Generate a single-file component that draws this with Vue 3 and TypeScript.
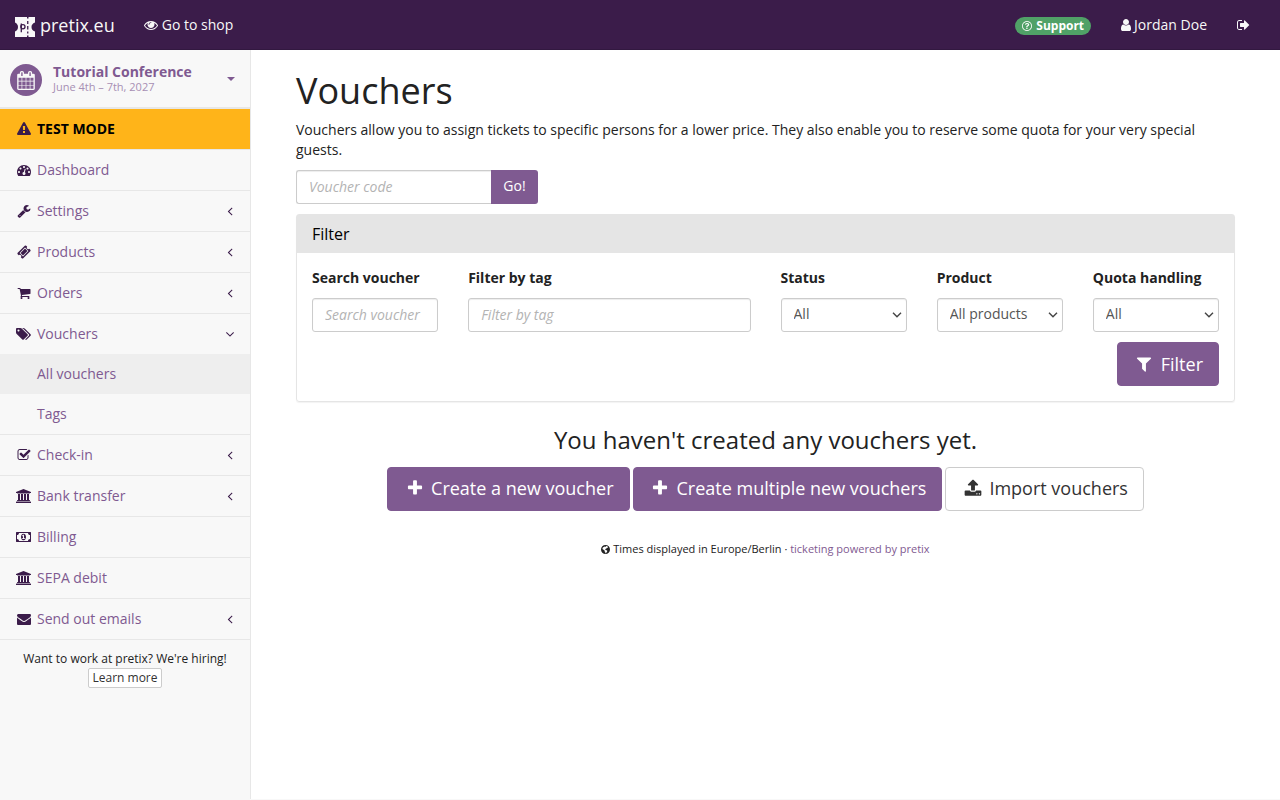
<script setup lang="ts">
import { h, ref } from 'vue'

interface Glyph {
  d: string
  x?: number
  w?: number
}

const glyphs: Record<string, Glyph> = {
  eye: { d: 'M1664 960q-152-236-381-353 61 104 61 225 0 185-131.5 316.5t-316.5 131.5-316.5-131.5-131.5-316.5q0-121 61-225-229 117-381 353 133 205 333.5 326.5t434.5 121.5 434.5-121.5 333.5-326.5zm-720-384q0-20-14-34t-34-14q-125 0-214.5 89.5t-89.5 214.5q0 20 14 34t34 14 34-14 14-34q0-86 61-147t147-61q20 0 34-14t14-34zm848 384q0 34-20 69-140 230-376.5 368.5t-499.5 138.5-499.5-139-376.5-368q-20-35-20-69t20-69q140-229 376.5-368t499.5-139 499.5 139 376.5 368q20 35 20 69z' },
  user: { x: 256, w: 1280, d: 'M1536 1399q0 109-62.5 187t-150.5 78h-854q-88 0-150.5-78t-62.5-187q0-85 8.5-160.5t31.5-152 58.5-131 94-89 134.5-34.5q131 128 313 128t313-128q76 0 134.5 34.5t94 89 58.5 131 31.5 152 8.5 160.5zm-256-887q0 159-112.5 271.5t-271.5 112.5-271.5-112.5-112.5-271.5 112.5-271.5 271.5-112.5 271.5 112.5 112.5 271.5z' },
  signOut: { x: 64, w: 1664, d: 'M704 1440q0 4 1 20t.5 26.5-3 23.5-10 19.5-20.5 6.5h-320q-119 0-203.5-84.5t-84.5-203.5v-704q0-119 84.5-203.5t203.5-84.5h320q13 0 22.5 9.5t9.5 22.5q0 4 1 20t.5 26.5-3 23.5-10 19.5-20.5 6.5h-320q-66 0-113 47t-47 113v704q0 66 47 113t113 47h312l11.5 1 11.5 3 8 5.5 7 9 2 13.5zm928-544q0 26-19 45l-544 544q-19 19-45 19t-45-19-19-45v-288h-448q-26 0-45-19t-19-45v-384q0-26 19-45t45-19h448v-288q0-26 19-45t45-19 45 19l544 544q19 19 19 45z' },
  question: { x: 128, w: 1536, d: 'M976 1192v128q0 14-9 23t-23 9h-128q-14 0-23-9t-9-23v-128q0-14 9-23t23-9h128q14 0 23 9t9 23zm240-484q0 50-15 90t-45.5 69-52 44-59.5 36q-32 18-46.5 28t-16 24-5.500 29v12q0 14-9 23t-23 9h-128q-14 0-23-9t-9-23v-48q0-35 10.500-64.500t24-47.500 39-35.500 41-25.500 44.500-21q53-25 75-43t22-49q0-42-43.500-71.500t-95.500-29.500q-56 0-95 27-29 20-70 73-9 12-25 12-11 0-19-6l-82-62q-10-7-12-20t5-23q112-182 319-182 119 0 218.500 79.500t99.500 204.500zm-320-452q-130 0-248.500 51t-204 136.500-136.500 204-51 248.500 51 248.500 136.500 204 204 136.500 248.500 51 248.500-51 204-136.500 136.500-204 51-248.500-51-248.500-136.500-204-204-136.500-248.500-51zm768 640q0 209-103 385.500t-279.500 279.500-385.500 103-385.500-103-279.500-279.500-103-385.500 103-385.500 279.500-279.500 385.500-103 385.500 103 279.500 279.500 103 385.500z' },
  calendar: { x: 64, w: 1664, d: 'M192 1664h288v-288h-288v288zm352 0h320v-288h-320v288zm-352-352h288v-320h-288v320zm352 0h320v-320h-320v320zm-352-384h288v-288h-288v288zm736 736h320v-288h-320v288zm-384-736h320v-288h-320v288zm768 736h288v-288h-288v288zm-384-352h320v-320h-320v320zm-352-864v-288q0-13-9.5-22.5t-22.5-9.5h-64q-13 0-22.5 9.5t-9.5 22.5v288q0 13 9.5 22.5t22.5 9.5h64q13 0 22.5-9.5t9.5-22.5zm736 864h288v-320h-288v320zm-384-384h320v-288h-320v288zm384 0h288v-288h-288v288zm32-480v-288q0-13-9.5-22.5t-22.5-9.5h-64q-13 0-22.5 9.5t-9.5 22.5v288q0 13 9.5 22.5t22.5 9.5h64q13 0 22.5-9.5t9.5-22.5zm384-64v1280q0 52-38 90t-90 38h-1408q-52 0-90-38t-38-90v-1280q0-52 38-90t90-38h128v-96q0-66 47-113t113-47h64q66 0 113 47t47 113v96h384v-96q0-66 47-113t113-47h64q66 0 113 47t47 113v96h128q52 0 90 38t38 90z' },
  warning: { d: 'M1024 1375v-190q0-14-9.5-23.5t-22.5-9.5h-192q-13 0-22.5 9.5t-9.5 23.5v190q0 14 9.5 23.5t22.5 9.5h192q13 0 22.5-9.5t9.5-23.5zm-2-374l18-459q0-12-10-19-13-11-24-11h-220q-11 0-24 11-10 7-10 21l17 457q0 10 10 16.5t24 6.5h185q14 0 23.5-6.5t10.5-16.5zm-14-934l768 1408q35 63-2 126-17 29-46.5 46t-63.5 17h-1536q-34 0-63.5-17t-46.5-46q-37-63-2-126l768-1408q17-31 47-49t65-18 65 18 47 49z' },
  dashboard: { d: 'M384 1152q0-53-37.5-90.5t-90.5-37.5-90.5 37.5-37.5 90.5 37.5 90.5 90.5 37.5 90.5-37.5 37.5-90.5zm192-448q0-53-37.5-90.5t-90.5-37.5-90.5 37.5-37.5 90.5 37.5 90.5 90.5 37.5 90.5-37.5 37.5-90.5zm428 481l101-382q6-26-7.5-48.5t-38.5-29.5-48 6.5-30 39.5l-101 382q-60 5-107 43.5t-63 98.5q-20 77 20 146t117 89 146-20 89-117q16-60-6-117t-72-91zm660-33q0-53-37.5-90.5t-90.5-37.5-90.5 37.5-37.5 90.5 37.5 90.5 90.5 37.5 90.5-37.5 37.5-90.5zm-640-640q0-53-37.5-90.5t-90.5-37.5-90.5 37.5-37.5 90.5 37.5 90.5 90.5 37.5 90.5-37.5 37.5-90.5zm448 192q0-53-37.5-90.5t-90.5-37.5-90.5 37.5-37.5 90.5 37.5 90.5 90.5 37.5 90.5-37.5 37.5-90.5zm320 448q0 261-141 483-19 29-54 29h-1402q-35 0-54-29-141-221-141-483 0-182 71-348t191-286 286-191 348-71 348 71 286 191 191 286 71 348z' },
  wrench: { d: 'M448 1472q0-26-19-45t-45-19-45 19-19 45 19 45 45 19 45-19 19-45zm644-420l-682 682q-37 37-90 37-52 0-91-37l-106-108q-38-36-38-90 0-53 38-91l681-681q39 98 114.5 173.5t173.5 114.5zm634-435q0 39-23 106-47 134-164.5 217.5t-258.5 83.5q-185 0-316.5-131.5t-131.5-316.5 131.5-316.5 316.5-131.5q58 0 121.5 16.5t107.5 46.5q16 11 16 28t-16 28l-293 169v224l193 107q5-3 79-48.5t135.5-81 70.5-35.5q15 0 23.5 10t8.5 25z' },
  ticket: { d: 'M1024 452l316 316-572 572-316-316zm-211 979l618-618q19-19 19-45t-19-45l-362-362q-18-18-45-18t-45 18l-618 618q-19 19-19 45t19 45l362 362q18 18 45 18t45-18zm889-637l-907 908q-37 37-90.5 37t-90.5-37l-126-126q56-56 56-136t-56-136-136-56-136 56l-125-126q-37-37-37-90.5t37-90.5l907-906q37-37 90.5-37t90.5 37l125 125q-56 56-56 136t56 136 136 56 136-56l126 125q37 37 37 90.5t-37 90.5z' },
  cart: { d: 'M704 1536q0 52-38 90t-90 38-90-38-38-90 38-90 90-38 90 38 38 90zm896 0q0 52-38 90t-90 38-90-38-38-90 38-90 90-38 90 38 38 90zm128-1088v512q0 24-16.5 42.5t-40.5 21.5l-1044 122q13 60 13 70 0 16-24 64h920q26 0 45 19t19 45-19 45-45 19h-1024q-26 0-45-19t-19-45q0-11 8-31.5t16-36 21.5-40 15.5-29.5l-177-823h-204q-26 0-45-19t-19-45 19-45 45-19h256q16 0 28.5 6.5t19.5 15.5 13 24.5 8 26 5.5 29.5 4.5 26h1201q26 0 45 19t19 45z' },
  tags: { w: 1920, d: 'M448 448q0-53-37.5-90.5t-90.5-37.5-90.5 37.5-37.5 90.5 37.5 90.5 90.5 37.5 90.5-37.5 37.5-90.5zm1067 576q0 53-37 90l-491 492q-39 37-91 37-53 0-90-37l-715-716q-38-37-64.5-101t-26.5-117v-416q0-52 38-90t90-38h416q53 0 117 26.5t102 64.5l715 714q37 39 37 91zm384 0q0 53-37 90l-491 492q-39 37-91 37-36 0-59-14t-53-45l470-470q37-37 37-90 0-52-37-91l-715-714q-38-38-102-64.5t-117-26.5h224q53 0 117 26.5t102 64.5l715 714q37 39 37 91z' },
  check: { d: 'M1472 930v318q0 119-84.5 203.5t-203.5 84.5h-832q-119 0-203.5-84.5t-84.5-203.5v-832q0-119 84.5-203.5t203.5-84.5h832q63 0 117 25 15 7 18 23 3 17-9 29l-49 49q-10 10-23 10-3 0-9-2-23-6-45-6h-832q-66 0-113 47t-47 113v832q0 66 47 113t113 47h832q66 0 113-47t47-113v-254q0-13 9-22l64-64q10-10 23-10 6 0 12 3 20 8 20 29zm231-489l-814 814q-24 24-57 24t-57-24l-430-430q-24-24-24-57t24-57l110-110q24-24 57-24t57 24l263 263 647-647q24-24 57-24t57 24l110 110q24 24 24 57t-24 57z' },
  bank: { w: 1920, d: 'M960 0l960 384v128h-128q0 26-20.5 45t-48.5 19h-1526q-28 0-48.5-19t-20.5-45h-128v-128zm-704 640h256v768h128v-768h256v768h128v-768h256v768h128v-768h256v768h59q28 0 48.5 19t20.5 45v64h-1664v-64q0-26 20.5-45t48.5-19h59v-768zm1595 960q28 0 48.5 19t20.5 45v128h-1920v-128q0-26 20.5-45t48.5-19h1782z' },
  money: { w: 1920, d: 'M768 1152h384v-96h-128v-448h-114l-148 137 77 80q42-37 55-57h2v288h-128v96zm512-256q0 70-21 142t-59.5 134-101.5 101-138 39-138-39-101.5-101-59.5-134-21-142 21-142 59.5-134 101.5-101 138-39 138 39 101.5 101 59.5 134 21 142zm512 256v-512q-106 0-181-75t-75-181h-1152q0 106-75 181t-181 75v512q106 0 181 75t75 181h1152q0-106 75-181t181-75zm128-832v1152q0 26-19 45t-45 19h-1792q-26 0-45-19t-19-45v-1152q0-26 19-45t45-19h1792q26 0 45 19t19 45z' },
  envelope: { d: 'M1792 710v794q0 66-47 113t-113 47h-1472q-66 0-113-47t-47-113v-794q44 49 101 87 362 246 497 345 57 42 92.5 65.5t94.5 48 110 24.5h2q51 0 110-24.5t94.5-48 92.5-65.5q170-123 498-345 57-39 100-87zm0-294q0 79-49 151t-122 123q-376 261-468 325-10 7-42.5 31t-54 38.5-52 32.5-57.5 27-50 9h-2q-23 0-50-9t-57.5-27-52-32.5-54-38.5-42.5-31q-91-64-262-182.5t-205-142.5q-62-42-117-115.5t-55-136.5q0-78 41.5-130t118.5-52h1472q65 0 112.5 47t47.5 113z' },
  filter: { d: 'M1595 295q17 41-14 70l-493 493v742q0 42-39 59-13 5-25 5-27 0-45-19l-256-256q-19-19-19-45v-486l-493-493q-31-29-14-70 17-39 59-39h1280q42 0 59 39z' },
  plus: { d: 'M1600 736v192q0 40-28 68t-68 28h-416v416q0 40-28 68t-68 28h-192q-40 0-68-28t-28-68v-416h-416q-40 0-68-28t-28-68v-192q0-40 28-68t68-28h416v-416q0-40 28-68t68-28h192q40 0 68 28t28 68v416h416q40 0 68 28t28 68z' },
  upload: { d: 'M1344 1472q0-26-19-45t-45-19-45 19-19 45 19 45 45 19 45-19 19-45zm256 0q0-26-19-45t-45-19-45 19-19 45 19 45 45 19 45-19 19-45zm128-224v320q0 40-28 68t-68 28h-1472q-40 0-68-28t-28-68v-320q0-40 28-68t68-28h427q21 56 70.5 92t110.5 36h256q61 0 110.5-36t70.5-92h427q40 0 68 28t28 68zm-325-648q-17 40-59 40h-256v448q0 26-19 45t-45 19h-256q-26 0-45-19t-19-45v-448h-256q-42 0-59-40-17-39 14-69l448-448q18-19 45-19t45 19l448 448q31 30 14 69z' },
  globe: { x: 128, w: 1536, d: 'M896 128a768 768 0 1 0 0 1536a768 768 0 1 0 0-1536zM1010 300l190 60 130 110-40 110-150 20-60 120-150 60-90 110 70 110 160 10 130 120-30 170-150 130-60 130-90-50-20-200-120-130-10-150-150-110-160-80-30-110 70-160 150-120 150-60 110 60 70-60z' },
  angleLeft: { d: 'M1203 544q0 13-10 23l-393 393 393 393q10 10 10 23t-10 23l-50 50q-10 10-23 10t-23-10l-466-466q-10-10-10-23t10-23l466-466q10-10 23-10t23 10l50 50q10 10 10 23z' },
  angleDown: { d: 'M1395 736q0 13-10 23l-466 466q-10 10-23 10t-23-10l-466-466q-10-10-10-23t10-23l50-50q10-10 23-10t23 10l393 393 393-393q10-10 23-10t23 10l50 50q10 10 10 23z' },
}

const Icon = (props: { name: string; size?: number }) => {
  const g = glyphs[props.name]
  const size = props.size ?? 14
  const w = g.w ?? 1792
  return h(
    'svg',
    {
      class: 'icon',
      viewBox: `${g.x ?? 0} 0 ${w} 1792`,
      width: Math.round((size * w) / 1792),
      height: size,
      'aria-hidden': 'true',
    },
    [h('path', { d: g.d, 'fill-rule': props.name === 'globe' ? 'evenodd' : 'nonzero' })],
  )
}
Icon.props = ['name', 'size']

interface NavItem {
  label: string
  icon: string
  arrow?: boolean
  children?: { label: string; active?: boolean }[]
}

const nav: NavItem[] = [
  { label: 'Dashboard', icon: 'dashboard' },
  { label: 'Settings', icon: 'wrench', arrow: true },
  { label: 'Products', icon: 'ticket', arrow: true },
  { label: 'Orders', icon: 'cart', arrow: true },
  {
    label: 'Vouchers',
    icon: 'tags',
    arrow: true,
    children: [{ label: 'All vouchers', active: true }, { label: 'Tags' }],
  },
  { label: 'Check-in', icon: 'check', arrow: true },
  { label: 'Bank transfer', icon: 'bank', arrow: true },
  { label: 'Billing', icon: 'money' },
  { label: 'SEPA debit', icon: 'bank' },
  { label: 'Send out emails', icon: 'envelope', arrow: true },
]

const code = ref('')
const search = ref('')
const tag = ref('')
const selects = ref([
  { id: 'status', label: 'Status', value: 'All' },
  { id: 'product', label: 'Product', value: 'All products' },
  { id: 'quota', label: 'Quota handling', value: 'All' },
])
</script>

<template>
  <div class="app">
    <header class="topbar">
      <a class="brand" href="#">
        <svg class="logo" viewBox="0 0 20 20" width="20" height="20" aria-hidden="true">
          <path class="logo-shape" d="M0 0H12V1.500H13.500V0H20V5.500C17.500 6.500 16.500 8 16.500 10S17.500 13.500 20 14.500V20H13.500V18.500H12V20H0V14.500C2 13.500 3 12 3 10S2 6.500 0 5.500Z" />
          <path class="logo-line" d="M12.750 4V7M12.750 9V12.500M12.750 14.500V16.500" />
          <path class="logo-line" d="M6.300 6.500V15.300" />
          <circle class="logo-line" cx="7.900" cy="9.800" r="2.100" />
        </svg>
        <span>pretix.eu</span>
      </a>
      <a class="top-link" href="#"><Icon name="eye" /><span>Go to shop</span></a>
      <nav class="top-right">
        <a class="support" href="#"><Icon name="question" :size="12" /><span>Support</span></a>
        <a class="top-link" href="#"><Icon name="user" /><span>Jordan Doe</span></a>
        <a class="top-link" href="#" aria-label="Log out"><Icon name="signOut" /></a>
      </nav>
    </header>

    <div class="columns">
      <aside class="sidebar">
        <button class="event" type="button">
          <span class="event-icon"><Icon name="calendar" :size="19" /></span>
          <span class="event-text">
            <strong>Tutorial Conference</strong>
            <small>June 4th – 7th, 2027</small>
          </span>
          <span class="caret"></span>
        </button>
        <ul class="nav">
          <li>
            <a class="nav-link test-mode" href="#"><span class="fw"><Icon name="warning" /></span><span>TEST MODE</span></a>
          </li>
          <li v-for="item in nav" :key="item.label">
            <a class="nav-link" href="#">
              <span class="fw"><Icon :name="item.icon" /></span>
              <span>{{ item.label }}</span>
              <span v-if="item.arrow" class="arrow"><Icon :name="item.children ? 'angleDown' : 'angleLeft'" /></span>
            </a>
            <ul v-if="item.children" class="sub">
              <li v-for="child in item.children" :key="child.label">
                <a class="sub-link" :class="{ active: child.active }" href="#">{{ child.label }}</a>
              </li>
            </ul>
          </li>
        </ul>
        <div class="hiring">
          <span>Want to work at pretix? We're hiring!</span>
          <a class="btn-xs" href="#">Learn more</a>
        </div>
      </aside>

      <main class="content">
        <h1>Vouchers</h1>
        <p class="intro">
          Vouchers allow you to assign tickets to specific persons for a lower price. They also enable you to reserve
          some quota for your very special guests.
        </p>
        <form class="go" @submit.prevent>
          <input v-model="code" class="control" type="text" placeholder="Voucher code" aria-label="Voucher code" />
          <button class="go-btn" type="submit">Go!</button>
        </form>

        <section class="panel">
          <h2 class="panel-title">Filter</h2>
          <form class="panel-body" @submit.prevent>
            <div class="fields">
              <div class="field">
                <label for="search">Search voucher</label>
                <input id="search" v-model="search" class="control" type="text" placeholder="Search voucher" />
              </div>
              <div class="field wide">
                <label for="tag">Filter by tag</label>
                <input id="tag" v-model="tag" class="control" type="text" placeholder="Filter by tag" />
              </div>
              <div v-for="s in selects" :key="s.id" class="field">
                <label :for="s.id">{{ s.label }}</label>
                <div class="select">
                  <select :id="s.id" v-model="s.value" class="control">
                    <option>{{ s.value }}</option>
                  </select>
                  <svg class="chevron" viewBox="0 0 10 6" width="10" height="6" aria-hidden="true">
                    <path d="M1 0.800L5 4.800L9 0.800" />
                  </svg>
                </div>
              </div>
            </div>
            <div class="actions">
              <button class="btn primary" type="submit"><span class="fw"><Icon name="filter" :size="18" /></span><span>Filter</span></button>
            </div>
          </form>
        </section>

        <section class="empty">
          <p>You haven't created any vouchers yet.</p>
          <div class="buttons">
            <a class="btn primary" href="#"><span class="fw"><Icon name="plus" :size="18" /></span><span>Create a new voucher</span></a>
            <a class="btn primary" href="#"><span class="fw"><Icon name="plus" :size="18" /></span><span>Create multiple new vouchers</span></a>
            <a class="btn" href="#"><span class="fw"><Icon name="upload" :size="18" /></span><span>Import vouchers</span></a>
          </div>
        </section>

        <footer class="foot">
          <Icon name="globe" :size="11" /> Times displayed in Europe/Berlin · <a href="#">ticketing powered by pretix</a>
        </footer>
      </main>
    </div>
  </div>
</template>

<style>
body {
  margin: 0;
  background: #f8f8f8;
}
</style>

<style scoped>
.app,
.app * {
  box-sizing: border-box;
}
.app {
  min-height: calc(100vh - 1px);
  display: flex;
  flex-direction: column;
  font-family: "Open Sans", "Noto Sans", sans-serif;
  font-size: 14px;
  line-height: 20px;
  color: #222;
}
a {
  color: #7f5a91;
  text-decoration: none;
}
button,
input,
select {
  font: inherit;
}
ul {
  list-style: none;
  margin: 0;
  padding: 0;
}
.icon {
  fill: currentColor;
  flex: none;
}

.topbar {
  display: flex;
  align-items: center;
  height: 50px;
  padding: 0 15px;
  background: #3b1c4a;
  border-bottom: 1px solid #321840;
}
.brand {
  display: flex;
  align-items: center;
  gap: 5px;
  padding-right: 14px;
  font-size: 18px;
  color: #f8f8f8;
}
.logo {
  margin-top: 4px;
}
.logo-shape {
  fill: #f8f8f8;
}
.logo-line {
  fill: none;
  stroke: #3b1c4a;
  stroke-width: 1.3;
}
.top-link {
  display: flex;
  align-items: center;
  gap: 4px;
  padding: 0 15px;
  color: #f8f8f8;
}
.top-right {
  display: flex;
  align-items: center;
  margin-left: auto;
}
.top-right .top-link {
  gap: 3px;
}
.support {
  display: flex;
  align-items: center;
  gap: 4px;
  height: 18px;
  margin: 3px 15px 0;
  padding: 0 7px;
  border-radius: 9px;
  background: #50a167;
  color: #fff;
  font-size: 12px;
  font-weight: 700;
}

.columns {
  flex: 1;
  display: flex;
}
.sidebar {
  flex: none;
  width: 251px;
  background: #f8f8f8;
  border-right: 1px solid #e7e7e7;
}
.event {
  display: flex;
  align-items: center;
  width: 100%;
  height: 59px;
  padding: 0 15px 0 10px;
  border: 0;
  border-bottom: 2px solid #e7e7e7;
  background: none;
  color: #7f5a91;
  text-align: left;
}
.event-icon {
  display: flex;
  align-items: center;
  justify-content: center;
  width: 32px;
  height: 32px;
  margin-top: 3px;
  border-radius: 50%;
  background: #7f5a91;
  color: #f8f8f8;
}
.event-text {
  display: flex;
  flex-direction: column;
  flex: 1;
  margin-left: 11px;
}
.event-text strong {
  line-height: 16px;
}
.event-text small {
  font-size: 11px;
  line-height: 14px;
  color: #a78fb4;
}
.caret {
  border: 4px solid transparent;
  border-top-color: #7f5a91;
  border-bottom: 0;
}
.nav > li {
  border-bottom: 1px solid #e7e7e7;
}
.nav-link {
  display: flex;
  align-items: center;
  gap: 5px;
  height: 40px;
  padding: 0 15px;
}
.fw {
  display: flex;
  justify-content: center;
  width: 17px;
  color: #3b1c4a;
}
.test-mode {
  background: #ffb419;
  color: #000;
  font-weight: 700;
}
.arrow {
  display: flex;
  margin-left: auto;
  margin-right: -2px;
  color: #3b1c4a;
}
.sub-link {
  display: block;
  padding: 10px 15px 10px 37px;
}
.sub-link.active {
  background: #eee;
}
.hiring {
  display: flex;
  flex-direction: column;
  align-items: center;
  padding-top: 10px;
  font-size: 12px;
  line-height: 18px;
}
.btn-xs {
  padding: 0 3px;
  border: 1px solid #ccc;
  border-radius: 2px;
  background: #fff;
  color: #333;
}

.content {
  flex: 1;
  min-width: 0;
  padding: 20px 45px;
  background: #fff;
}
h1 {
  margin: 0 0 8px;
  font-size: 36px;
  font-weight: 400;
  line-height: 42px;
}
.intro {
  margin: 0 0 10px;
}
.go {
  display: flex;
  width: 242px;
  margin-bottom: 10px;
}
.go .control {
  flex: 1;
  min-width: 0;
  border-right: 0;
  border-radius: 3px 0 0 3px;
}
.go-btn {
  width: 47px;
  height: 34px;
  padding: 0 0 2px;
  border: 0;
  border-radius: 0 3px 3px 0;
  background: #7f5a91;
  color: #fff;
}
.control {
  display: block;
  width: 100%;
  height: 34px;
  padding: 5px 12px 7px;
  border: 1px solid #ccc;
  border-radius: 3px;
  background: #fff;
  box-shadow: inset 0 1px 1px rgba(0, 0, 0, 0.075);
  color: #555;
}
.control::placeholder {
  color: #b3b3b3;
  font-style: italic;
}
.select {
  position: relative;
}
.select .control {
  appearance: none;
}
.chevron {
  position: absolute;
  top: 14px;
  right: 5px;
  fill: none;
  stroke: #444;
  stroke-width: 1.4;
  pointer-events: none;
}
.panel {
  border: 1px solid #e5e5e5;
  border-radius: 3px;
  box-shadow: 0 1px 1px rgba(0, 0, 0, 0.05);
}
.panel-title {
  margin: 0;
  padding: 10px 15px;
  background: #e5e5e5;
  color: #000;
  font-size: 16px;
  font-weight: 400;
  line-height: 18px;
}
.panel-body {
  padding: 15px;
}
.fields {
  display: grid;
  grid-template-columns: repeat(6, minmax(0, 1fr));
  gap: 30px;
}
.wide {
  grid-column: span 2;
}
.field label {
  display: block;
  margin-bottom: 10px;
  font-weight: 700;
}
.actions {
  display: flex;
  justify-content: flex-end;
  margin-top: 10px;
}
.btn {
  display: flex;
  align-items: center;
  gap: 5px;
  height: 44px;
  padding: 0 15px;
  border: 1px solid #ccc;
  border-radius: 4px;
  background: #fff;
  color: #333;
  font-size: 18px;
}
.btn .fw {
  width: 23px;
  color: inherit;
}
.primary {
  border-color: #7f5a91;
  background: #7f5a91;
  color: #fff;
}
.empty {
  padding-top: 24px;
  text-align: center;
}
.empty p {
  margin: 0 0 13px;
  font-size: 24px;
  line-height: 28px;
}
.buttons {
  display: flex;
  justify-content: center;
  gap: 3px;
}
.buttons .btn {
  padding-bottom: 2px;
}
.foot {
  margin-top: 28px;
  text-align: center;
  font-size: 11px;
}
.foot .icon {
  vertical-align: -2px;
}
</style>
